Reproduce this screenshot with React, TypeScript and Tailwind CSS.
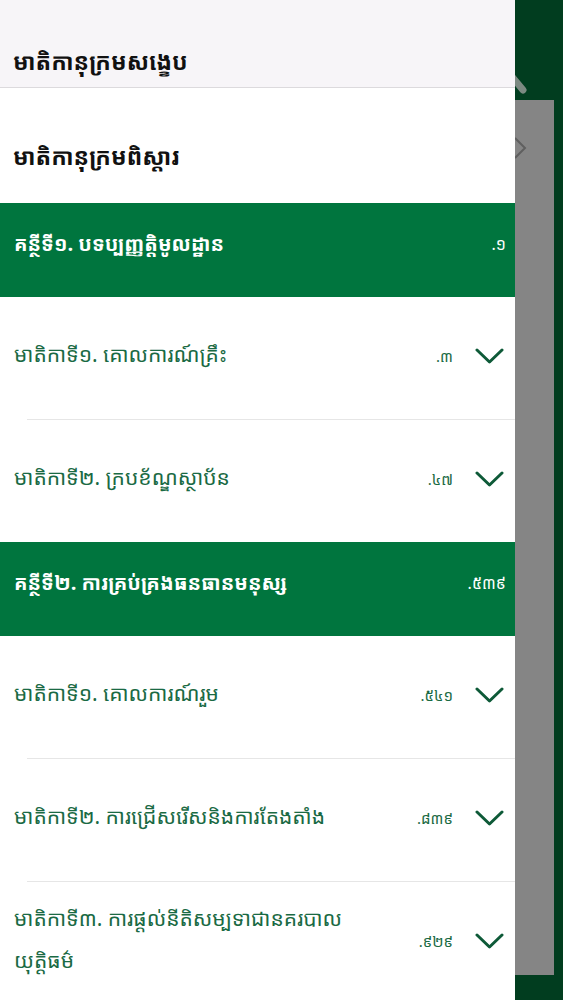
import React from "react";

interface Item {
  title: string;
  page: string;
}

interface Part {
  title: string;
  page: string;
  items: Item[];
}

const parts: Part[] = [
  {
    title: "គន្ថីទី១. បទប្បញ្ញត្តិមូលដ្ឋាន",
    page: ".១",
    items: [
      { title: "មាតិកាទី១. គោលការណ៍គ្រឹះ", page: ".៣" },
      { title: "មាតិកាទី២. ក្របខ័ណ្ឌស្ថាប័ន", page: ".៤៧" },
    ],
  },
  {
    title: "គន្ថីទី២. ការគ្រប់គ្រងធនធានមនុស្ស",
    page: ".៥៣៩",
    items: [
      { title: "មាតិកាទី១. គោលការណ៍រួម", page: ".៥៤១" },
      { title: "មាតិកាទី២. ការជ្រើសរើសនិងការតែងតាំង", page: ".៨៣៩" },
      { title: "មាតិកាទី៣. ការផ្ដល់នីតិសម្បទាជានគរបាលយុត្តិធម៌", page: ".៩២៩" },
    ],
  },
];

const font = "font-['Noto_Sans_Khmer','Khmer_OS','Noto_Sans','DejaVu_Sans',sans-serif]";

function Chevron() {
  return (
    <svg width="29" height="18" viewBox="0 0 29 18" fill="none" className="shrink-0">
      <path d="M2 3 L14.5 15 L27 3" stroke="#0e5a38" strokeWidth="3" strokeLinecap="round" strokeLinejoin="round" />
    </svg>
  );
}

function Row({ item }: { item: Item }) {
  return (
    <div className="flex min-h-[122px] shrink-0 items-center justify-between gap-4 pl-[14px] pr-[11px]">
      <span className="max-w-[360px] pb-[8px] text-[21px] leading-[42px] text-[#1a6a44]">{item.title}</span>
      <div className="flex items-center gap-[22px] pb-[4px]">
        <span className="text-[15px] text-[#1a6a44]">{item.page}</span>
        <Chevron />
      </div>
    </div>
  );
}

export default function App() {
  return (
    <div className={`flex h-[1000px] w-[563px] overflow-hidden ${font}`}>
      {/* drawer */}
      <aside className="flex w-[515px] shrink-0 flex-col bg-white">
        <div className="flex h-[88px] shrink-0 items-end border-b border-[#dcdadd] bg-[#f7f5f8] px-[13px] pb-[14px]">
          <h1 className="text-[23px] font-bold leading-none text-[#111]">មាតិកានុក្រមសង្ខេប</h1>
        </div>
        <div className="flex h-[115px] shrink-0 items-center px-[13px] pt-[22px]">
          <h2 className="text-[23px] font-bold leading-none text-[#111]">មាតិកានុក្រមពិស្តារ</h2>
        </div>

        {parts.map((part) => (
          <section key={part.title} className="flex shrink-0 flex-col">
            <div className="flex h-[94px] shrink-0 items-center justify-between bg-[#00753e] pb-[12px] pl-[14px] pr-[9px] text-white">
              <span className="text-[20px] font-bold">{part.title}</span>
              <span className="text-[16px]">{part.page}</span>
            </div>
            {part.items.map((item, i) => (
              <React.Fragment key={item.title}>
                {i > 0 && <div className="ml-[27px] h-px shrink-0 bg-[#e6e6e6]" />}
                <Row item={item} />
              </React.Fragment>
            ))}
          </section>
        ))}
      </aside>

      {/* dimmed page behind the drawer */}
      <div className="flex flex-1 flex-col bg-[#013d1f] pb-[25px] pr-[9px]">
        <svg width="39" height="100" viewBox="0 0 39 100" className="shrink-0">
          <path d="M-2 78 L8 90" stroke="#7c8a82" strokeWidth="7" strokeLinecap="round" />
        </svg>
        <div className="flex-1 bg-[#858585] pt-[36px]">
          <svg width="14" height="24" viewBox="0 0 14 24" fill="none">
            <path d="M0 2 L10 12 L0 22" stroke="#5f5f5f" strokeWidth="2" />
          </svg>
        </div>
      </div>
    </div>
  );
}
